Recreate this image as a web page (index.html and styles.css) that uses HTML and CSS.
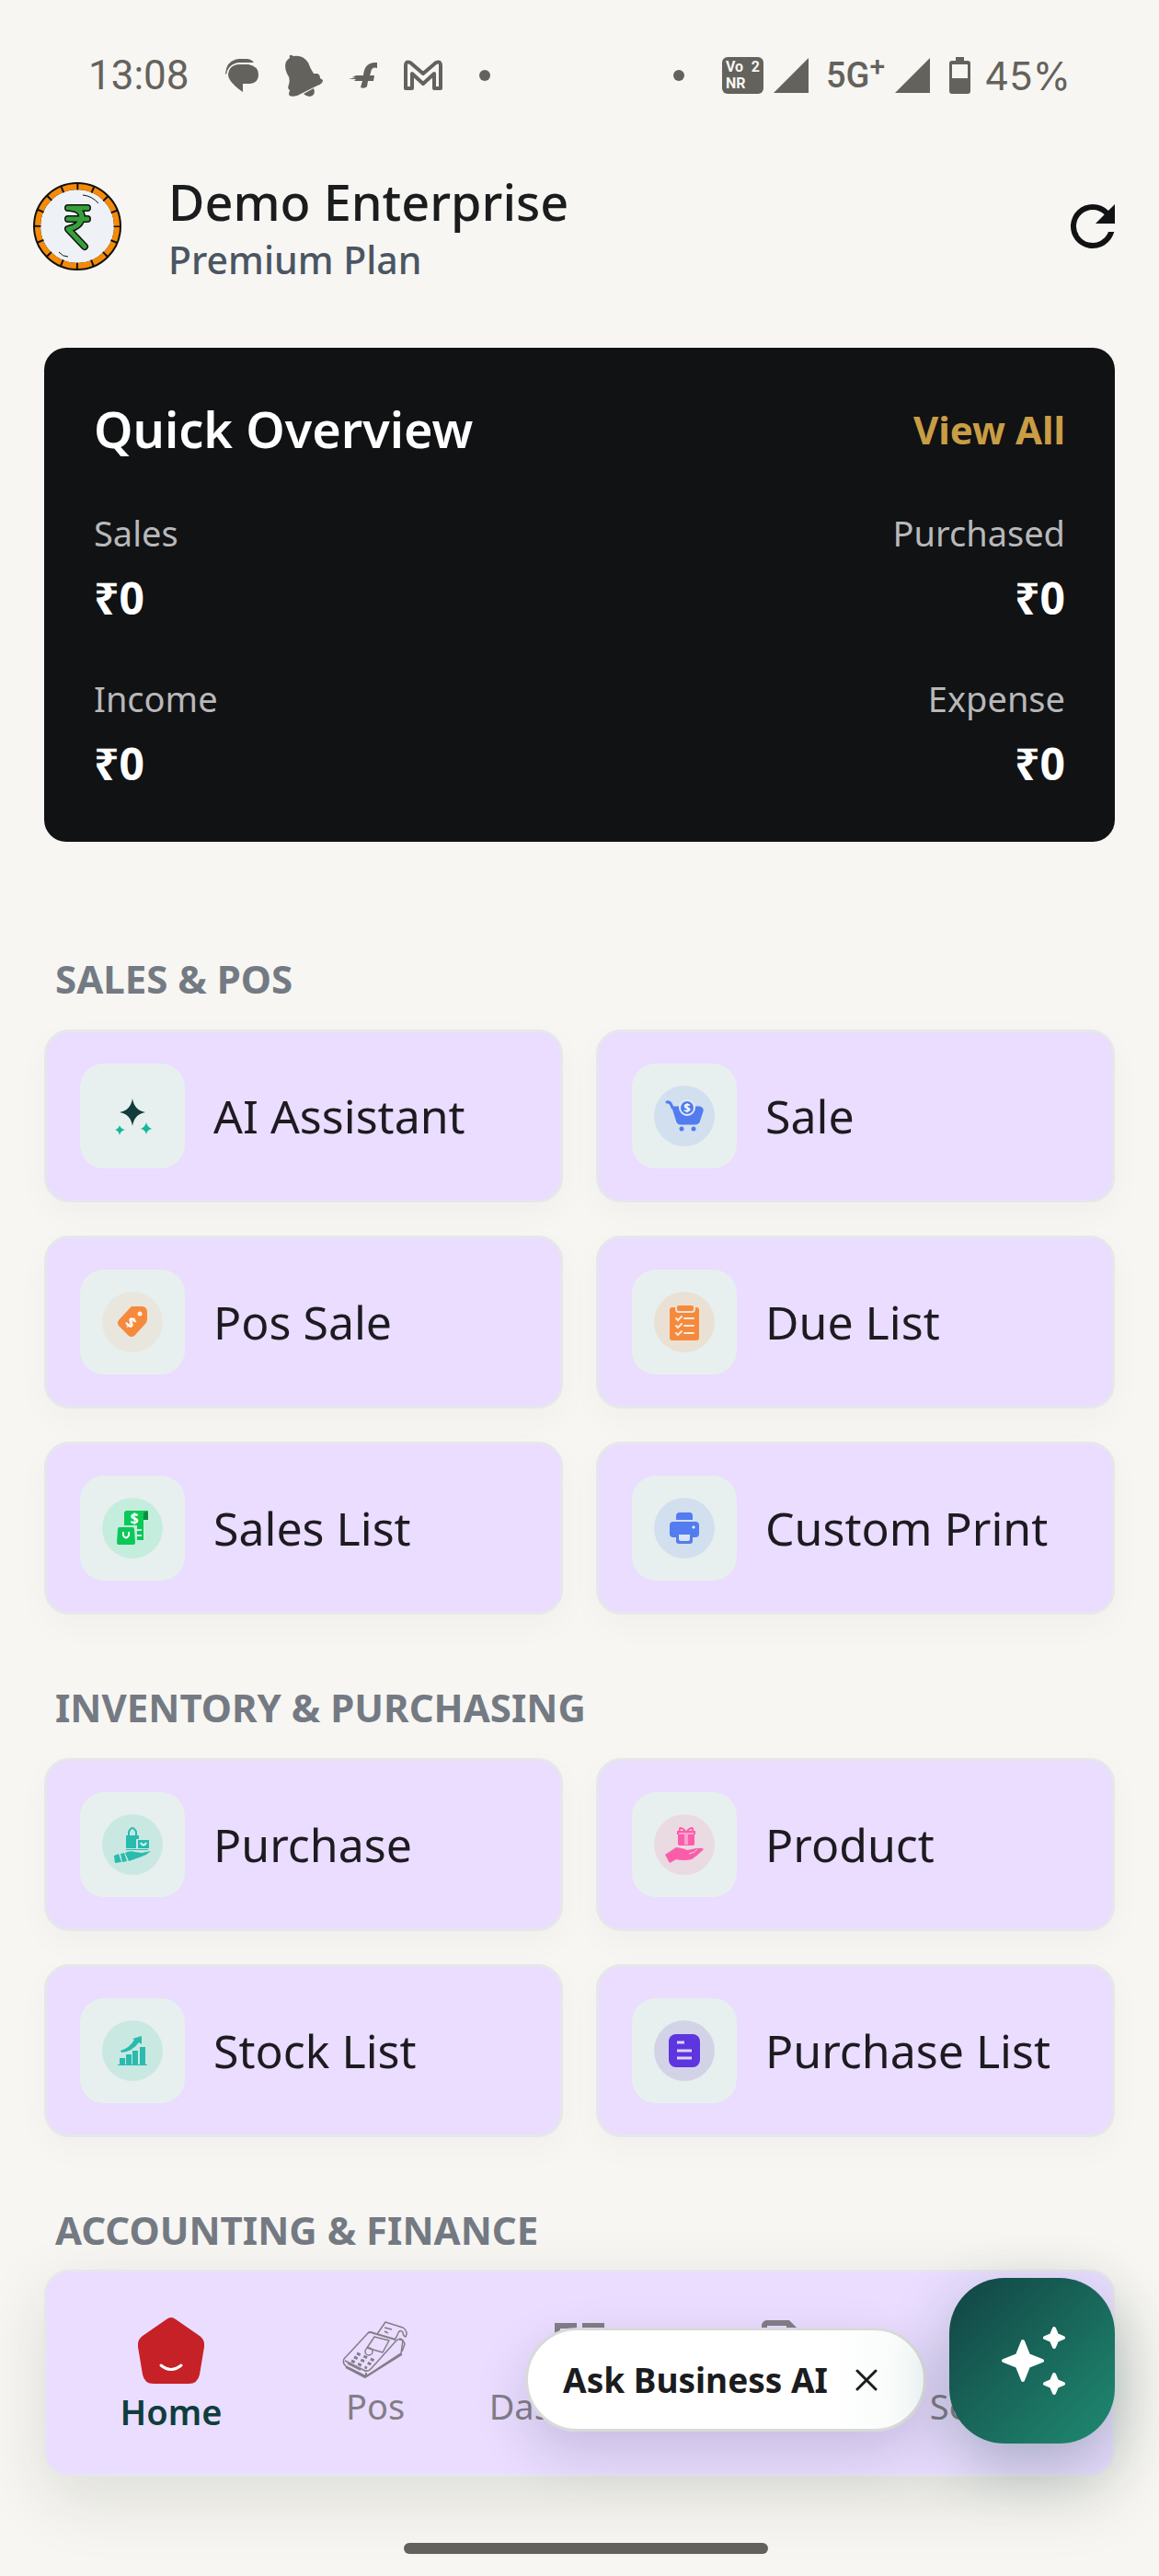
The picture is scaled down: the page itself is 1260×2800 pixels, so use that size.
FILE: index.html
```html
<!DOCTYPE html>
<html lang="en">
<head>
<meta charset="utf-8">
<meta name="viewport" content="width=device-width, initial-scale=1">
<title>Demo Enterprise</title>
<link rel="stylesheet" href="styles.css">
</head>
<body>
<div class="status">
  <div class="status-left">
    <span class="clock">13:08</span>
    <svg width="36" height="36" viewBox="0 0 36 36" fill="currentColor"><path d="M0 16Q1 1 15 0H23Q28 0 31 4H15Q3 5 1 17Z"/><path d="M14 6H25Q36 8 36 17Q36 26 27 27H19V36Q3 25 3 17Q4 7 14 6Z"/></svg>
    <svg width="42" height="46" viewBox="0 0 42 46" fill="currentColor"><path d="M6 4Q5 0 8 1L10 2Q20 0 26 9Q28 15 32 21H36Q39 22 39 26L42 28Q42 32 36 34L14 45Q5 47 5 43L6 39Q3 37 5 33Q7 26 3 21Q-2 9 6 4Z"/><path d="M21 43 32 37Q35 44 28 46Q24 46 21 43Z"/></svg>
    <svg width="32" height="28" viewBox="0 0 32 28" fill="currentColor"><path d="M31 0V6Q25 4 24 11L23 14H28L27 20H21L20 26Q17 29 13 27L15 20H6L8 18H0L8 16H4L8 14H16Q17 -1 31 0Z"/></svg>
    <svg width="42" height="34" viewBox="0 0 42 34" fill="none" stroke="currentColor" stroke-width="4" stroke-linejoin="round"><path d="M2 6Q2 1 7 3L21 15 35 3Q40 1 40 6V31H33V15L21 26 9 15V31H2Z"/></svg>
    <span class="dot"></span>
  </div>
  <div class="status-right">
    <span class="dot dot-right"></span>
    <span class="vonr"><span>Vo</span><span>2</span><span>NR</span></span>
    <svg width="38" height="38" viewBox="0 0 38 38" fill="currentColor"><path d="M38 0V38H0Z"/></svg>
    <span class="network">5G<sup>+</sup></span>
    <svg width="38" height="38" viewBox="0 0 38 38" fill="currentColor"><path d="M38 0V38H0Z"/></svg>
    <svg class="battery" width="23" height="40" viewBox="0 0 23 40" fill="currentColor"><path fill-rule="evenodd" d="M7 0H16V4H20Q23 4 23 7V37Q23 40 20 40H3Q0 40 0 37V7Q0 4 3 4H7ZM3 8V23H20V8Z"/></svg>
    <span class="percent">45%</span>
  </div>
</div>

<header class="appbar">
  <svg class="avatar" viewBox="0 0 96 96" fill="none">
    <circle cx="48" cy="48" r="44" fill="#eef2f6" stroke="#111" stroke-width="8"/>
    <circle cx="48" cy="48" r="43" stroke="#f58a07" stroke-width="6"/>
    <circle cx="48" cy="48" r="43" stroke="#111" stroke-width="7" stroke-dasharray="2 14.89" stroke-dashoffset="1"/>
    <g stroke-linejoin="round" stroke-linecap="round"><path d="M38 28H59M38 40H59M40 28Q53 29 53 38Q52 48 38 51L56 70" stroke="#111" stroke-width="8"/><path d="M38 28H59M38 40H59M40 28Q53 29 53 38Q52 48 38 51L56 70" stroke="#35a03a" stroke-width="5"/></g>
    <path d="M54 14Q64 15 71 23M28 76Q32 81 38 81" stroke="#111" stroke-width="1"/>
  </svg>
  <div class="business">
    <h1>Demo Enterprise</h1>
    <p>Premium Plan</p>
  </div>
  <button class="refresh" aria-label="Refresh"><svg width="72" height="72" viewBox="0 0 24 24" fill="#111214"><path d="M17.65 6.35A7.96 7.96 0 0 0 12 4a8 8 0 1 0 7.73 10h-2.08A6 6 0 1 1 12 6c1.66 0 3.14.69 4.22 1.78L13 11h7V4l-2.35 2.35z"/></svg></button>
</header>

<main>
  <section class="overview">
    <div class="overview-head"><h2>Quick Overview</h2><a href="#all">View All</a></div>
    <dl class="figures">
      <div><dt>Sales</dt><dd>₹0</dd></div>
      <div><dt>Purchased</dt><dd>₹0</dd></div>
      <div><dt>Income</dt><dd>₹0</dd></div>
      <div><dt>Expense</dt><dd>₹0</dd></div>
    </dl>
  </section>

  <section class="group">
    <h2>SALES &amp; POS</h2>
    <div class="tiles">
      <a class="tile" href="#ai"><span class="badge"><svg viewBox="0 0 66 66"><path fill="#123c3b" d="M33 14Q35 27 47 29Q35 31 33 44Q31 31 19 29Q31 27 33 14Z"/><g fill="#12b99a"><path d="M19 43Q20 47 25 48Q20 49 19 54Q18 49 14 48Q18 47 19 43Z"/><path d="M48 40Q49 45 54 47Q49 48 48 53Q47 48 42 47Q47 45 48 40Z"/></g></svg></span><span>AI Assistant</span></a>
      <a class="tile" href="#sale"><span class="badge"><svg viewBox="0 0 66 66"><circle cx="33" cy="33" r="33" fill="#d2dfee"/><g fill="#527cf0"><path d="M14 18H17Q19 19 20 24L25 40Q26 42 28 42H45Q48 42 49 40L53 28Q54 24 50 23H21" stroke="#527cf0" stroke-width="1"/><path d="M14 18Q18 17 20 24" fill="none" stroke="#527cf0" stroke-width="3" stroke-linecap="round"/><circle cx="30" cy="47" r="2.5"/><circle cx="43" cy="47" r="2.5"/><circle cx="36" cy="24" r="8" stroke="#e3edf5" stroke-width="2"/></g><text x="36" y="29" class="glyph glyph-s">$</text></svg></span><span>Sale</span></a>
      <a class="tile" href="#pos"><span class="badge"><svg viewBox="0 0 66 66"><circle cx="33" cy="33" r="33" fill="#e9e7dd"/><path fill="#f58a3c" d="M33 16H44Q49 17 49 22V30Q49 33 47 35L35 48Q32 50 29 48L18 37Q16 34 18 31L30 18Q31 16 33 16Z"/><circle cx="41" cy="24" r="2.5" fill="#f3ede2"/><text x="31" y="39" class="glyph" transform="rotate(42 31 34)">$</text></svg></span><span>Pos Sale</span></a>
      <a class="tile" href="#due"><span class="badge"><svg viewBox="0 0 66 66"><circle cx="33" cy="33" r="33" fill="#eae1d4"/><rect x="17" y="17" width="32" height="36" rx="3" fill="#f58a3c"/><rect x="24" y="14" width="20" height="8" rx="3" fill="#f58a3c" stroke="#eae1d4" stroke-width="2"/><path fill="none" stroke="#f7eadf" stroke-width="2" stroke-linecap="round" d="M24 29l2 2 4-4M33 29h10M24 37l2 2 4-4M33 37h10M24 45l2 2 4-4M33 45h10"/></svg></span><span>Due List</span></a>
      <a class="tile" href="#sales"><span class="badge"><svg viewBox="0 0 66 66"><circle cx="33" cy="33" r="33" fill="#c5eddd"/><path fill="#0bc858" d="M27 14H50V24H45V46H38V30H24V17Q24 14 27 14Z"/><path fill="#078f3d" d="M45 17Q49 12 50 17V24H45Z"/><path d="M37 35H43M37 41H43" stroke="#c5eddd" stroke-width="2"/><path fill="#0bc858" stroke="#c5eddd" stroke-width="2" d="M19 31H33Q36 31 36 34L37 49Q37 52 34 52H18Q15 52 15 49L16 34Q16 31 19 31Z"/><path d="M23 37V41Q26 46 29 41V37" fill="none" stroke="#fff" stroke-width="2"/><text x="35" y="28" class="glyph">$</text></svg></span><span>Sales List</span></a>
      <a class="tile" href="#print"><span class="badge"><svg viewBox="0 0 66 66"><circle cx="33" cy="33" r="33" fill="#d2dfee"/><g fill="#527cf0"><path d="M28 16H39Q42 16 42 20V24H24V20Q24 16 28 16Z"/><rect x="17" y="26" width="32" height="17" rx="4"/><rect x="24" y="36" width="18" height="14" rx="3"/></g><path d="M27 40H39V45Q39 47 37 47H29Q27 47 27 45Z" fill="#d8e4f4"/><circle cx="43" cy="32" r="1.5" fill="#fff"/></svg></span><span>Custom Print</span></a>
    </div>
  </section>

  <section class="group">
    <h2>INVENTORY &amp; PURCHASING</h2>
    <div class="tiles">
      <a class="tile" href="#purchase"><span class="badge"><svg viewBox="0 0 66 66"><circle cx="33" cy="33" r="33" fill="#cae8e2"/><g fill="#2abbae"><path d="M26 23H40V27H37V37H26Z"/><path d="M29 25V19Q33 11 37 19V25" fill="none" stroke="#2abbae" stroke-width="2"/><rect x="39" y="28" width="12" height="9"/><path d="M26 38H50V39H26ZM13 45 18 43 21 52 14 53ZM20 43 24 42 27 51 22 52ZM25 42Q30 39 36 41L43 42 53 40Q49 44 43 46L29 51Z"/></g><path d="M42 31Q45 36 48 31" fill="none" stroke="#e5f5f2" stroke-width="2"/></svg></span><span>Purchase</span></a>
      <a class="tile" href="#product"><span class="badge"><svg viewBox="0 0 66 66"><circle cx="33" cy="33" r="33" fill="#eadae2"/><g fill="#fb5da9"><path d="M25 18H45V22H44V32Q44 34 42 34H28Q26 34 26 32V22H25Z"/><path d="M34 18Q27 12 28 18M36 18Q43 12 42 18" fill="none" stroke="#fb5da9" stroke-width="2"/><path d="M12 44 24 36Q32 37 36 39L46 37Q52 36 54 38Q47 45 41 49Q32 51 24 49L17 53Z"/></g><path d="M34 22V33M36 22V33M27 21H43" stroke="#ffe4f1" stroke-width="1"/><path d="M38 43Q44 42 47 38" stroke="#eadae2" fill="none"/></svg></span><span>Product</span></a>
      <a class="tile" href="#stock"><span class="badge"><svg viewBox="0 0 66 66"><circle cx="33" cy="33" r="33" fill="#cae8e2"/><g fill="#2abbae"><path d="M17 48H49V49H17ZM19 41H25V48H19ZM26 37H32V48H26ZM33 33H39V48H33ZM41 29H47V48H41Z"/><path d="M20 33Q30 30 35 21L33 20 43 17V26L40 24Q33 34 21 35Z"/></g></svg></span><span>Stock List</span></a>
      <a class="tile" href="#purchases"><span class="badge"><svg viewBox="0 0 66 66"><circle cx="33" cy="33" r="33" fill="#d3d3e8"/><rect x="16" y="15" width="34" height="36" rx="8" fill="#5d36df"/><path d="M25 24H33M25 33H41M25 41H41" stroke="#ddd5fa" stroke-width="3"/></svg></span><span>Purchase List</span></a>
    </div>
  </section>

  <section class="group">
    <h2>ACCOUNTING &amp; FINANCE</h2>
  </section>
</main>

<div class="dock">
  <nav class="tabs">
    <a class="tab tab-active" href="#home" aria-current="page"><svg viewBox="0 0 72 72"><path fill="#c62127" d="M31 2Q36 -2 41 2L67 20Q73 24 72 32L67 62Q65 72 55 72H17Q7 72 5 62L0 32Q-1 24 5 20Z"/><path d="M25 52Q36 61 47 52" fill="none" stroke="#fff" stroke-width="3" stroke-linecap="round"/></svg><span>Home</span></a>
    <a class="tab" href="#pos"><svg viewBox="0 0 72 72" fill="none" stroke="currentColor" stroke-width="1.5" stroke-linejoin="round"><path d="M28 20 2 48Q0 53 4 56L26 67 64 42 66 28Q63 24 58 29L32 58Q28 63 23 60L3 50"/><path d="M28 20Q30 18 34 20L58 27M26 63V67M4 57 25 68 65 43" stroke-width="2"/><path d="M35 24 51 28 44 41 27 36ZM38 21 47 8 66 14Q72 18 69 24Q66 23 66 19Q62 15 60 22L57 28M46 14 54 16M46 18 50 20M62 27Q67 27 68 32L65 40M6 53 20 60"/><circle cx="29" cy="40" r="4"/><path stroke-width="3" stroke-dasharray="4 4" d="M16 42 38 51M13 46 34 55M10 50 27 58"/></svg><span>Pos</span></a>
    <a class="tab" href="#dashboard"><svg viewBox="0 0 24 24" fill="currentColor"><path d="M19 5v2h-4V5h4M9 5v6H5V5h4m10 8v6h-4v-6h4M9 17v2H5v-2h4M21 3h-8v6h8V3zM11 3H3v10h8V3zm10 8h-8v10h8V11zm-10 4H3v6h8v-6z"/></svg><span>Dashboard</span></a>
    <a class="tab" href="#reports" aria-label="Reports"><svg viewBox="0 0 24 24" fill="currentColor"><path d="M8 16h8v2H8zm0-4h8v2H8zm6-10H6c-1.100 0-2 .9-2 2v16c0 1.100.89 2 1.990 2H18c1.100 0 2-.9 2-2V8l-6-6zm4 18H6V4h7v5h5v11z"/></svg></a>
    <a class="tab" href="#setting"><svg viewBox="0 0 24 24" fill="none" stroke="currentColor" stroke-width="2"><circle cx="12" cy="12" r="8"/><circle cx="12" cy="12" r="3"/></svg><span>Setting</span></a>
  </nav>
  <div class="assistant">
    <div class="prompt">
      <button class="ask">Ask Business AI</button>
      <button class="close" aria-label="Close"><svg width="24" height="24" viewBox="0 0 24 24" fill="none" stroke="#1b1c1e" stroke-width="3" stroke-linecap="round"><path d="M2 2 22 22M22 2 2 22"/></svg></button>
    </div>
    <button class="fab" aria-label="Open assistant"><svg viewBox="0 0 180 180" fill="#fff" stroke="#fff" stroke-width="4" stroke-linejoin="round"><path d="M80 69 86 84 101 90 86 96 80 111 74 96 59 90 74 84Z"/><path d="M114 55 117 62 124 65 117 68 114 75 111 68 104 65 111 62ZM114 105 117 112 124 115 117 118 114 125 111 118 104 115 111 112Z"/></svg></button>
  </div>
</div>
<div class="gesture"><div class="gesture-bar"></div></div>
</body>
</html>
```
FILE: styles.css
```css
* {
  box-sizing: border-box;
}

body {
  margin: 0;
  background: #f7f6f2;
  color: #1d1b20;
  font-family: "Noto Sans", sans-serif;
}

h1, h2, p, dl, dd {
  margin: 0;
}

a {
  color: inherit;
  text-decoration: none;
}

button {
  border: 0;
  padding: 0;
  background: none;
  color: inherit;
  font: inherit;
}

svg {
  display: block;
  flex: none;
}

/* Status bar */
.status {
  display: flex;
  justify-content: space-between;
  height: 164px;
  padding: 0 96px;
  color: #64625d;
  font-family: Roboto, sans-serif;
  font-size: 44px;
}

.status-left, .status-right {
  display: flex;
  align-items: center;
}

.status-left {
  gap: 28px;
}

.status-right {
  gap: 11px;
}

.clock {
  margin-right: 11px;
}

.percent {
  font-family: Inter, sans-serif;
  font-size: 42px;
}

.dot {
  width: 12px;
  height: 12px;
  margin-left: 12px;
  border-radius: 50%;
  background: currentColor;
}

.dot-right {
  margin-right: 30px;
}

.vonr {
  display: grid;
  grid-template-columns: auto auto;
  justify-content: space-between;
  width: 45px;
  height: 40px;
  padding: 2px 4px;
  border-radius: 6px;
  background: currentColor;
  font-size: 16px;
  font-weight: 700;
  line-height: 18px;
}

.vonr span {
  color: #f7f6f2;
}

.network {
  display: flex;
  margin: 0 0 0 8px;
  font-size: 38px;
  font-weight: 500;
  line-height: 44px;
}

.network sup {
  font-size: 30px;
  line-height: 24px;
}

.battery {
  margin: 0 4px 0 10px;
}

/* App bar */
.appbar {
  display: flex;
  align-items: center;
  height: 164px;
  padding: 0 36px;
}

.avatar {
  width: 96px;
  height: 96px;
}

.business {
  flex: 1;
  margin-left: 51px;
}

.business h1 {
  color: #1b1c1e;
  font-size: 54px;
  font-weight: 500;
  line-height: 72px;
}

.business p {
  color: #4b5563;
  font-size: 41px;
  font-weight: 500;
  line-height: 54px;
}

main {
  padding: 50px 48px 0;
}

/* Overview card */
.overview {
  padding: 52px 54px;
  border-radius: 24px;
  background: #111214;
  color: #fff;
}

.overview-head {
  display: flex;
  align-items: center;
  justify-content: space-between;
  margin-bottom: 50px;
}

.overview h2 {
  font-size: 54px;
  font-weight: 600;
  line-height: 72px;
}

.overview a {
  color: #c99d45;
  font-size: 42px;
  font-weight: 700;
  line-height: 57px;
}

.figures {
  display: grid;
  grid-template-columns: 1fr 1fr;
  row-gap: 49px;
}

.figures div:nth-child(even) {
  text-align: right;
}

.figures dt {
  margin-bottom: 11px;
  color: #b8b8b9;
  font-size: 38px;
  line-height: 54px;
}

.figures dd {
  font-size: 48px;
  font-weight: 700;
  line-height: 66px;
}

/* Shortcut groups */
.group {
  margin-top: 72px;
}

.overview + .group {
  margin-top: 120px;
}

.group h2 {
  padding-left: 12px;
  color: #747a83;
  font-size: 42px;
  font-weight: 700;
  line-height: 57px;
}

.tiles {
  display: grid;
  grid-template-columns: 1fr 1fr;
  gap: 36px;
  margin-top: 27px;
}

.tile {
  display: flex;
  align-items: center;
  gap: 31px;
  padding: 34px 36px;
  border: 3px solid #e5e7eb;
  border-radius: 27px;
  background: #eaddff;
  box-shadow: 0 12px 36px rgba(0, 0, 0, .03);
  font-size: 50px;
  line-height: 66px;
}

.badge {
  display: grid;
  place-items: center;
  flex: none;
  width: 114px;
  height: 114px;
  border-radius: 26px;
  background: #e7f0ee;
}

.badge svg {
  width: 66px;
  height: 66px;
}

.glyph {
  fill: #fff;
  font-size: 16px;
  font-weight: 700;
  text-anchor: middle;
}

.glyph-s {
  font-size: 13px;
}

/* Bottom navigation */
.dock {
  position: relative;
  margin: 15px 48px 0;
}

.tabs {
  display: grid;
  grid-template-columns: repeat(5, 1fr);
  padding: 46px 24px 41px;
  border: 3px solid #e7e5ee;
  border-radius: 27px;
  background: #eaddff;
  box-shadow: 0 24px 72px rgba(30, 40, 35, .12);
}

.tab {
  display: flex;
  flex-direction: column;
  align-items: center;
  color: #837d87;
  font-size: 38px;
  line-height: 54px;
}

.tab svg {
  width: 72px;
  height: 72px;
}

.tab-active {
  gap: 3px;
  padding-top: 3px;
  color: #0f3d3e;
  font-weight: 600;
}

/* Floating assistant, over the navigation */
.assistant {
  position: absolute;
  right: 0;
  bottom: 36px;
  display: flex;
  align-items: flex-end;
  gap: 25px;
}

.prompt {
  display: flex;
  align-items: center;
  gap: 30px;
  height: 113px;
  margin-bottom: 13px;
  padding: 0 50px 0 38px;
  border: 3px solid #d9d9da;
  border-radius: 57px;
  background: linear-gradient(90deg, #fff 75%, #f7fbfa);
  box-shadow: 0 24px 60px rgba(20, 20, 60, .16);
}

.ask {
  color: #1b1c1e;
  font-size: 37px;
  font-weight: 700;
  line-height: 54px;
}

.fab {
  width: 180px;
  height: 180px;
  border-radius: 60px;
  background: linear-gradient(135deg, #124344, #1f8a70);
  box-shadow: 0 24px 66px rgba(15, 61, 62, .3);
}

/* Gesture handle */
.gesture {
  display: flex;
  justify-content: center;
  padding: 72px 0 24px 14px;
}

.gesture-bar {
  width: 396px;
  height: 12px;
  border-radius: 6px;
  background: #64625d;
}
```
